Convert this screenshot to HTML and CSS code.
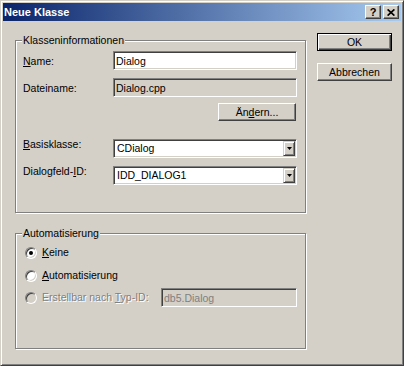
FILE: index.html
```html
<!DOCTYPE html>
<html lang="de">
<head>
  <meta charset="UTF-8">
  <title>Neue Klasse</title>
  <meta name="viewport" content="width=device-width, initial-scale=1.0" />
  <link rel="stylesheet" href="styles.css">
</head>
<body>

  <div class="window">
    <div class="titlebar">
      <span class="title">Neue Klasse</span>
      <div class="caption-buttons">
        <button class="caption-btn help">?</button>
        <button class="caption-btn close">
          <svg width="8" height="7" viewBox="0 0 8 7">
            <path d="M0.6 0.4 L7.4 6.6 M7.4 0.4 L0.6 6.6" stroke="#000" stroke-width="1.7" fill="none" />
          </svg>
        </button>
      </div>
    </div>

    <div class="dialog-body">
      <div class="left-col">

        <div class="group group-class">
          <span class="group-title">Klasseninformationen</span>

          <div class="row">
            <label class="label label-edit" for="name"><u>N</u>ame:</label>
            <input type="text" id="name" class="edit" value="Dialog" />
          </div>

          <div class="row row-next">
            <span class="label label-edit">Dateiname:</span>
            <input type="text" class="edit readonly" value="Dialog.cpp" readonly />
          </div>

          <div class="row row-button">
            <button class="push-btn change-btn">Än<u>d</u>ern...</button>
          </div>

          <div class="row row-combo">
            <span class="label label-combo"><u>B</u>asisklasse:</span>
            <div class="combo">
              <span class="combo-text">CDialog</span>
              <span class="combo-arrow">
                <svg width="5" height="3" viewBox="0 0 5 3"><polygon points="0,0 5,0 2.5,3" fill="#000" /></svg>
              </span>
            </div>
          </div>

          <div class="row row-next">
            <span class="label label-combo">Dialogfeld-<u>I</u>D:</span>
            <div class="combo">
              <span class="combo-text">IDD_DIALOG1</span>
              <span class="combo-arrow">
                <svg width="5" height="3" viewBox="0 0 5 3"><polygon points="0,0 5,0 2.5,3" fill="#000" /></svg>
              </span>
            </div>
          </div>
        </div>

        <div class="group group-auto">
          <span class="group-title">Automatisierung</span>

          <div class="radio-row">
            <span class="radio checked"></span>
            <span><u>K</u>eine</span>
          </div>

          <div class="radio-row radio-second">
            <span class="radio"></span>
            <span><u>A</u>utomatisierung</span>
          </div>

          <div class="radio-row radio-third">
            <span class="radio disabled"></span>
            <span class="disabled-text">Erstellbar nach <u>T</u>yp-ID:</span>
            <input type="text" class="edit readonly typ-id" value="db5.Dialog" disabled />
          </div>
        </div>

      </div>

      <div class="right-col">
        <button class="push-btn default">OK</button>
        <button class="push-btn cancel">Abbrechen</button>
      </div>
    </div>
  </div>

</body>
</html>
```

FILE: styles.css
```css
:root {
  --face: #d4d0c8;
  --shadow: #808080;
  --dark: #404040;
  --light: #ffffff;
  --font-main: 'Liberation Sans', Arial, sans-serif;
}

* {
  box-sizing: border-box;
}

body {
  margin: 0;
  font-family: var(--font-main);
  font-size: 10.5px;
  line-height: 13px;
  color: #000;
}

u {
  text-decoration-thickness: 1px;
  text-underline-offset: 1px;
}

.window {
  width: 404px;
  height: 366px;
  background: var(--face);
  border: 1px solid;
  border-color: var(--face) var(--dark) var(--dark) var(--face);
  box-shadow: inset 1px 1px var(--light), inset -1px -1px var(--shadow);
  padding: 2px;
  display: flex;
  flex-direction: column;
}

/* title bar */
.titlebar {
  height: 18px;
  flex: none;
  background: linear-gradient(to right, #0a246a, #a6caf0);
  display: flex;
  align-items: center;
  justify-content: space-between;
  padding: 0 2px 0 1px;
}

.title {
  color: #fff;
  font-weight: bold;
  font-size: 11px;
  line-height: 18px;
}

.caption-buttons {
  display: flex;
  gap: 2px;
}

.caption-btn {
  width: 16px;
  height: 14px;
  padding: 0;
  background: var(--face);
  border: 1px solid;
  border-color: var(--light) var(--dark) var(--dark) var(--light);
  box-shadow: inset -1px -1px var(--shadow);
  display: flex;
  align-items: center;
  justify-content: center;
  font: bold 11px var(--font-main);
  color: #000;
}

.caption-btn svg {
  display: block;
}

/* body */
.dialog-body {
  display: flex;
  align-items: flex-start;
  padding-left: 12px;
}

.left-col {
  margin-top: 19px;
}

.right-col {
  margin-top: 12px;
  margin-left: 11px;
  display: flex;
  flex-direction: column;
  gap: 12px;
}

/* group boxes */
.group {
  position: relative;
  width: 291px;
  border: 1px solid var(--shadow);
  box-shadow: inset 1px 1px var(--light), 1px 1px var(--light);
}

.group-title {
  position: absolute;
  top: -7px;
  left: 6px;
  padding: 0 1px;
  background: var(--face);
}

.group-class {
  height: 173px;
  padding: 10px 8px 0 7px;
}

.group-auto {
  height: 116px;
  margin-top: 20px;
  padding: 12px 8px 0 9px;
}

/* rows */
.row {
  display: flex;
  align-items: flex-start;
}

.row-next {
  margin-top: 8px;
}

.row-button {
  margin-top: 6px;
  justify-content: flex-end;
}

.row-combo {
  margin-top: 18px;
}

.label {
  width: 90px;
  flex: none;
}

.label-edit {
  margin-top: 4px;
}

.label-combo {
  margin-top: -1px;
}

/* fields */
.edit {
  width: 184px;
  height: 19px;
  margin: 0;
  padding: 0 2px;
  font: inherit;
  color: #000;
  background: #fff;
  border: 1px solid;
  border-color: var(--shadow) var(--light) var(--light) var(--shadow);
  box-shadow: inset 1px 1px var(--dark), inset -1px -1px var(--face);
  outline: none;
}

.edit.readonly {
  background: var(--face);
}

.edit:disabled {
  color: var(--shadow);
  -webkit-text-fill-color: var(--shadow);
  opacity: 1;
}

.combo {
  width: 184px;
  height: 19px;
  display: flex;
  background: #fff;
  border: 1px solid;
  border-color: var(--shadow) var(--light) var(--light) var(--shadow);
  box-shadow: inset 1px 1px var(--dark), inset -1px -1px var(--face);
  padding: 1px;
}

.combo-text {
  flex: 1;
  padding-left: 2px;
  line-height: 15px;
}

.combo-arrow {
  width: 12px;
  background: var(--face);
  border: 1px solid;
  border-color: var(--face) var(--dark) var(--dark) var(--face);
  box-shadow: inset 1px 1px var(--light), inset -1px -1px var(--shadow);
  display: flex;
  align-items: center;
  justify-content: center;
}

.combo-arrow svg {
  display: block;
}

/* buttons */
.push-btn {
  width: 75px;
  height: 18px;
  padding: 0;
  font: inherit;
  color: #000;
  background: var(--face);
  border: 1px solid;
  border-color: var(--light) var(--dark) var(--dark) var(--light);
  box-shadow: inset -1px -1px var(--shadow);
}

.push-btn.default {
  border-color: #000;
  box-shadow: inset 1px 1px var(--light), inset -1px -1px var(--dark), inset -2px -2px var(--shadow);
}

.change-btn {
  width: 78px;
  margin-right: 1px;
}

/* radios */
.radio-row {
  display: flex;
  align-items: center;
  gap: 5px;
  height: 13px;
}

.radio-second {
  margin-top: 10px;
}

.radio-third {
  margin-top: 6px;
  height: 19px;
}

.radio {
  width: 12px;
  height: 12px;
  flex: none;
  border-radius: 50%;
  background: #fff;
  border: 1px solid;
  border-color: var(--shadow) var(--light) var(--light) var(--shadow);
  box-shadow: inset 1px 1px var(--dark), inset -1px -1px var(--face);
  display: flex;
  align-items: center;
  justify-content: center;
}

.radio.checked::after {
  content: "";
  width: 4px;
  height: 4px;
  border-radius: 50%;
  background: #000;
}

.radio.disabled {
  background: var(--face);
}

.disabled-text {
  color: var(--shadow);
  text-shadow: 1px 1px 0 var(--light);
}

.typ-id {
  width: 136px;
  margin-left: auto;
}
```
